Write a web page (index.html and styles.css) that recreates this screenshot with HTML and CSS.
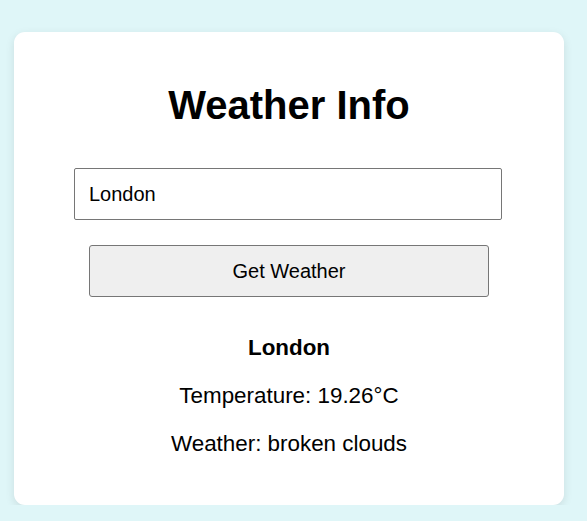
FILE: index.html
```html
<!DOCTYPE html>
<html>
<head>
<meta charset="utf-8">
<link rel="stylesheet" href="styles.css">
</head>
<body>
<div class="card">
  <h1 class="title">Weather Info</h1>
  <input class="city" type="text" value="London">
  <button class="btn">Get Weather</button>
  <div class="result">
    <p class="city-name">London</p>
    <p class="line">Temperature: 19.26°C</p>
    <p class="line">Weather: broken clouds</p>
  </div>
</div>
</body>
</html>
```

FILE: styles.css
```css
html, body {
  margin: 0;
  padding: 0;
}
body {
  background: #dff6f8;
  font-family: "Liberation Sans", Arial, sans-serif;
  color: #000;
  padding: 32px 0 0 14px;
}
.card {
  width: 550px;
  box-sizing: border-box;
  background: #fff;
  border-radius: 11px;
  box-shadow: 0 3px 10px rgba(0, 0, 0, 0.1);
  padding: 50px 0 48px;
  display: flex;
  flex-direction: column;
  align-items: center;
}
.title {
  font-size: 40px;
  font-weight: bold;
  line-height: 46px;
  margin: 0 0 40px;
}
.city {
  width: 428px;
  height: 52px;
  box-sizing: border-box;
  padding: 0 14px;
  font-family: "Liberation Sans", Arial, sans-serif;
  font-size: 20px;
  border: 1px solid #767676;
  border-radius: 2px;
  margin: 0 2px 25px 0;
  outline: none;
}
.btn {
  width: 400px;
  height: 52px;
  box-sizing: border-box;
  background: #efefef;
  border: 1px solid #767676;
  border-radius: 3px;
  font-family: "Liberation Sans", Arial, sans-serif;
  font-size: 20px;
  color: #000;
  margin: 0 0 38px;
}
.result {
  display: flex;
  flex-direction: column;
  align-items: center;
  gap: 22px;
}
.result p {
  margin: 0;
  font-size: 22.4px;
  line-height: 26px;
}
.city-name {
  font-weight: bold;
}
```
